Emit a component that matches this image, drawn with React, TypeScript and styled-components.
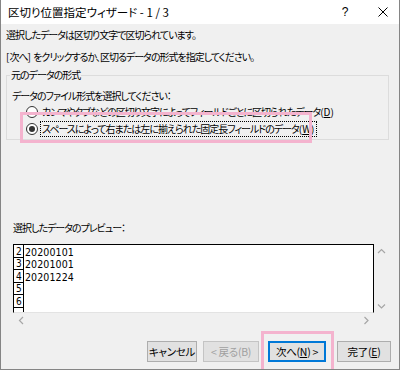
import styled, { createGlobalStyle } from "styled-components";

const GlobalStyle = createGlobalStyle`
  html, body {
    margin: 0;
    padding: 0;
    background: #fff;
  }
  body {
    font-family: "Noto Sans CJK JP", "Noto Sans", sans-serif;
    font-size: 10px;
    letter-spacing: -1px;
    color: #000;
    font-feature-settings: "palt";
  }
  * {
    box-sizing: border-box;
  }
`;

const Window = styled.div`
  position: relative;
  width: 400px;
  height: 370px;
  display: flex;
  flex-direction: column;
  background: #f0f0f0;
  border: 1px solid #858585;
  border-top: none;
  overflow: hidden;
`;

const TitleBar = styled.div`
  height: 24px;
  flex-shrink: 0;
  display: flex;
  align-items: center;
  background: #fff;
  padding-left: 7px;
`;

const TitleText = styled.span`
  flex: 1;
  font-size: 11.5px;
  letter-spacing: 0;
`;

const CaptionButton = styled.span<{ $w: number }>`
  width: ${(p) => p.$w}px;
  height: 24px;
  display: flex;
  align-items: center;
  justify-content: center;
  font-family: "Liberation Sans", sans-serif;
  font-size: 12px;
  letter-spacing: 0;
`;

const Body = styled.div`
  flex: 1;
  display: flex;
  flex-direction: column;
  padding: 3px 0 0 5px;
`;

const Message = styled.p`
  margin: 0;
  line-height: 16px;
  & + & {
    margin-top: 6px;
  }
`;

const Latin = styled.span`
  letter-spacing: 0;
`;

const Group = styled.div`
  margin: 10px 10px 0 0;
  padding: 0 5px 2px;
  border: 1px solid #dcdcdc;
`;

const GroupTitle = styled.div`
  width: fit-content;
  margin: -9px 0 0 -2px;
  padding: 0 1px;
  background: #f0f0f0;
  line-height: 16px;
`;

const Prompt = styled.div`
  margin-top: 5px;
  line-height: 16px;
`;

const RadioRow = styled.label<{ $gap?: number }>`
  display: flex;
  align-items: center;
  height: 16px;
  margin-top: ${(p) => p.$gap ?? 0}px;
  padding-left: 14px;
  gap: 2px;
  white-space: nowrap;
`;

const RadioMark = styled.span<{ $on?: boolean }>`
  width: 12px;
  height: 12px;
  border-radius: 50%;
  border: 1px solid #333;
  background: #fff;
  display: flex;
  align-items: center;
  justify-content: center;
  flex-shrink: 0;
  &::after {
    content: "";
    width: 6px;
    height: 6px;
    border-radius: 50%;
    background: ${(p) => (p.$on ? "#333" : "transparent")};
  }
`;

const RadioLabel = styled.span<{ $focus?: boolean }>`
  padding: 0 2px 0 1px;
  line-height: 14px;
  border: 1px dotted ${(p) => (p.$focus ? "#000" : "transparent")};
`;

const PreviewLabel = styled.div`
  margin: 80px 0 0 7px;
  line-height: 16px;
`;

const Preview = styled.div`
  margin: 8px 0 0 7px;
  display: grid;
  grid-template-columns: 361px 14px;
  grid-template-rows: 69px 14px;
`;

const DataBox = styled.div`
  background: #fff;
  border: 1px solid #000;
  border-bottom-color: #e3e3e3;
  overflow: hidden;
`;

const DataRow = styled.div`
  display: flex;
  height: 12.6px;
`;

const NumCell = styled.span`
  width: 10px;
  flex-shrink: 0;
  border-right: 1px solid #000;
  border-bottom: 1px solid #000;
  display: flex;
  align-items: flex-end;
  padding-left: 2px;
  font-family: "Liberation Sans Narrow", "DejaVu Sans Condensed", sans-serif;
  font-size: 10px;
  line-height: 11px;
  letter-spacing: 0;
`;

const DataCell = styled.span`
  padding-left: 1px;
  display: flex;
  align-items: flex-end;
  font-family: "Liberation Sans Narrow", "DejaVu Sans Condensed", sans-serif;
  font-size: 10.5px;
  line-height: 11px;
  letter-spacing: 0.1px;
`;

const ScrollV = styled.div`
  display: flex;
  flex-direction: column;
  justify-content: space-between;
  align-items: center;
  padding: 4px 0 3px;
`;

const ScrollH = styled.div`
  display: flex;
  justify-content: space-between;
  align-items: center;
  padding: 0 4px 0 5px;
`;

const ButtonRow = styled.div`
  margin-top: 14px;
  padding-right: 8px;
  display: flex;
  justify-content: flex-end;
`;

const Button = styled.button<{ $w: number; $gap: number; $primary?: boolean }>`
  width: ${(p) => p.$w}px;
  height: 21px;
  margin-left: ${(p) => p.$gap}px;
  padding: 0;
  white-space: nowrap;
  font-family: inherit;
  font-size: 10.5px;
  letter-spacing: -0.3px;
  font-feature-settings: "palt";
  color: #000;
  background: #e1e1e1;
  border: 1px solid ${(p) => (p.$primary ? "#0078d7" : "#adadad")};
  box-shadow: ${(p) => (p.$primary ? "inset 0 0 0 1px #0078d7" : "none")};
  &:disabled {
    color: #a0a0a0;
    border-color: #c4c4c4;
  }
`;

const Highlight = styled.div<{ $x: number; $y: number; $w: number; $h: number }>`
  position: absolute;
  left: ${(p) => p.$x}px;
  top: ${(p) => p.$y}px;
  width: ${(p) => p.$w}px;
  height: ${(p) => p.$h}px;
  border: 3px solid #f4b3ce;
  pointer-events: none;
`;

const Chevron = ({ dir }: { dir: "up" | "down" | "left" | "right" }) => {
  const pts = {
    up: "1,5 4.5,1.5 8,5",
    down: "1,1.5 4.5,5 8,1.5",
    left: "5,1 1.5,4.5 5,8",
    right: "1.5,1 5,4.5 1.5,8",
  }[dir];
  const vert = dir === "up" || dir === "down";
  return (
    <svg width={vert ? 9 : 7} height={vert ? 7 : 9} viewBox={vert ? "0 0 9 7" : "0 0 7 9"}>
      <polyline points={pts} fill="none" stroke="#a6a6a6" strokeWidth="1.2" />
    </svg>
  );
};

const rows = [
  { n: "2", v: "20200101" },
  { n: "3", v: "20201001" },
  { n: "4", v: "20201224" },
  { n: "5", v: "" },
  { n: "6", v: "" },
  { n: "", v: "" },
];

export default function App() {
  return (
    <>
      <GlobalStyle />
      <Window>
        <TitleBar>
          <TitleText>区切り位置指定ウィザード - 1 / 3</TitleText>
          <CaptionButton $w={44}>?</CaptionButton>
          <CaptionButton $w={32}>
            <svg width="10" height="10" viewBox="0 0 10 10">
              <path d="M0.5 0.5 L9.5 9.5 M9.5 0.5 L0.5 9.5" stroke="#000" strokeWidth="1" />
            </svg>
          </CaptionButton>
        </TitleBar>
        <Body>
          <Message>選択したデータは区切り文字で区切られています。</Message>
          <Message>
            <Latin>[</Latin>次へ<Latin>] </Latin>をクリックするか、区切るデータの形式を指定してください。
          </Message>
          <Group>
            <GroupTitle>元のデータの形式</GroupTitle>
            <Prompt>データのファイル形式を選択してください：</Prompt>
            <RadioRow>
              <RadioMark />
              <RadioLabel>
                カンマやタブなどの区切り文字によってフィールドごとに区切られたデータ
                <Latin>
                  (<u>D</u>)
                </Latin>
              </RadioLabel>
            </RadioRow>
            <RadioRow $gap={1}>
              <RadioMark $on />
              <RadioLabel $focus>
                スペースによって右または左に揃えられた固定長フィールドのデータ
                <Latin>
                  (<u>W</u>)
                </Latin>
              </RadioLabel>
            </RadioRow>
          </Group>
          <PreviewLabel>選択したデータのプレビュー：</PreviewLabel>
          <Preview>
            <DataBox>
              {rows.map((r, i) => (
                <DataRow key={i}>
                  <NumCell>{r.n}</NumCell>
                  <DataCell>{r.v}</DataCell>
                </DataRow>
              ))}
            </DataBox>
            <ScrollV>
              <Chevron dir="up" />
              <Chevron dir="down" />
            </ScrollV>
            <ScrollH>
              <Chevron dir="left" />
              <Chevron dir="right" />
            </ScrollH>
          </Preview>
          <ButtonRow>
            <Button $w={50} $gap={0}>キャンセル</Button>
            <Button $w={56} $gap={6} disabled>
              &lt; 戻る(B)
            </Button>
            <Button $w={58} $gap={9} $primary>
              次へ(<u>N</u>) &gt;
            </Button>
            <Button $w={54} $gap={11}>
              完了(<u>E</u>)
            </Button>
          </ButtonRow>
        </Body>
        <Highlight $x={19} $y={112} $w={292} $h={31} />
        <Highlight $x={260} $y={331} $w={73} $h={42} />
      </Window>
    </>
  );
}
